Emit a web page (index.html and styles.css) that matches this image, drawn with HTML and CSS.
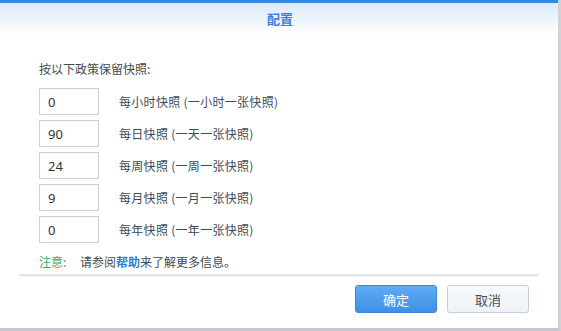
FILE: index.html
```html
<!DOCTYPE html>
<html>
<head>
<meta charset="utf-8">
<link rel="stylesheet" href="styles.css">
</head>
<body>
<div class="dialog">
  <div class="topbar"></div>
  <div class="header"><span class="title">配置</span></div>
  <div class="content">
    <div class="intro">按以下政策保留快照:</div>
    <div class="rows">
      <div class="row"><div class="field">0</div><span class="label">每小时快照 (一小时一张快照)</span></div>
      <div class="row"><div class="field">90</div><span class="label">每日快照 (一天一张快照)</span></div>
      <div class="row"><div class="field">24</div><span class="label">每周快照 (一周一张快照)</span></div>
      <div class="row"><div class="field">9</div><span class="label">每月快照 (一月一张快照)</span></div>
      <div class="row"><div class="field">0</div><span class="label">每年快照 (一年一张快照)</span></div>
    </div>
    <div class="note"><span class="note-key">注意:</span><span class="note-text">请参阅<b class="link">帮助</b>来了解更多信息。</span></div>
  </div>
  <div class="footer">
    <div class="sep"></div>
    <div class="buttons">
      <div class="btn primary">确定</div>
      <div class="btn">取消</div>
    </div>
  </div>
</div>
</body>
</html>
```

FILE: styles.css
```css
html, body {
  margin: 0;
  padding: 0;
  background: #ffffff;
}
body {
  font-family: "Noto Sans CJK SC", "Noto Sans", sans-serif;
  font-size: 12px;
  color: #414b55;
}
.dialog {
  width: 558px;
  height: 328px;
  border-right: 3px solid #cfd2d6;
  border-bottom: 3px solid #c4c7cb;
  background: #fff;
  display: flex;
  flex-direction: column;
}
.topbar {
  height: 3px;
  background: #3a88de;
}
.header {
  height: 32px;
  background: linear-gradient(#dbe9f8, #ffffff);
  display: flex;
  justify-content: center;
  align-items: center;
}
.title {
  font-size: 13px;
  font-weight: bold;
  color: #3a80d6;
  margin-left: 2px;
  line-height: 16px;
}
.content {
  padding: 26px 0 0 39px;
  height: 213px;
}
.intro {
  line-height: 16px;
  height: 16px;
}
.rows {
  margin-top: 11px;
  display: flex;
  flex-direction: column;
  gap: 5px;
}
.row {
  display: flex;
  align-items: center;
}
.field {
  width: 58px;
  height: 25px;
  border: 1px solid #c9d1da;
  box-sizing: content-box;
  display: flex;
  align-items: center;
  text-indent: 8px;
  font-family: "Noto Sans", sans-serif;
  font-size: 13px;
  color: #333;
}
.label {
  margin-left: 20px;
  line-height: 16px;
  letter-spacing: 0.3px;
}
.note {
  margin-top: 11px;
  line-height: 16px;
  display: flex;
}
.note-key {
  color: #3aa565;
  width: 41px;
}
.link {
  color: #2d7fd6;
}
.footer {
  padding: 0 20px 0 19px;
}
.sep {
  height: 2px;
  background: #e6e6e6;
  border-bottom: 1px solid #f3f3f3;
  width: 519px;
}
.buttons {
  margin-top: 8px;
  display: flex;
  justify-content: flex-end;
  gap: 10px;
  padding-right: 9px;
}
.btn {
  width: 80px;
  height: 26px;
  border: 1px solid #c5ced8;
  border-radius: 3px;
  background: linear-gradient(#f7f9fb, #eef2f6);
  color: #4a4f55;
  font-size: 13px;
  display: flex;
  align-items: center;
  justify-content: center;
}
.btn.primary {
  border-color: #3c86d6;
  background: linear-gradient(#5eacf6, #3f8fe6);
  color: #fff;
}
```
